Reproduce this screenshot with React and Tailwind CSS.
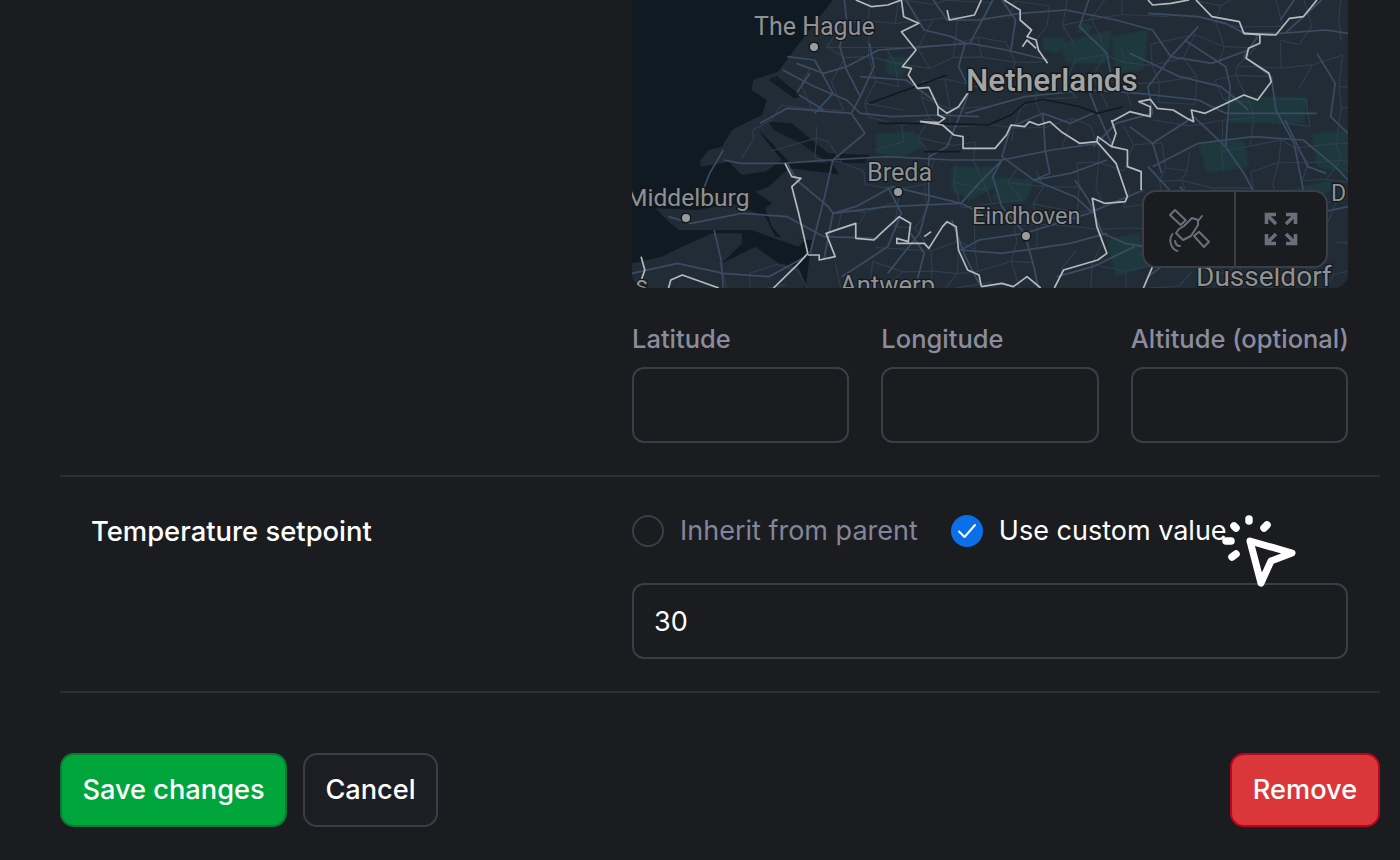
const font = { fontFamily: "Inter, 'Liberation Sans', sans-serif" };

// map shapes are in a 1568x864 space, squeezed to the 716x288 map
const water = ["M0,0 L440,0 L400,70 L355,150 L320,215 L265,240 L262,270 L295,300 L285,345 L225,385 L150,465 L120,520 L0,560 Z"];
// south west corner, in a 720x480 space that starts 130px down the map
const delta = "M0,0 L380,0 L420,40 L470,95 L600,100 L620,130 L580,160 L530,180 L540,330 L530,400 L530,480 L0,480 Z";
const islands = [
  "M205,90 L230,60 L270,50 L300,0 L380,0 L400,30 L450,90 L400,125 L330,135 L290,95 L240,105 L205,110 Z",
  "M370,185 L410,170 L470,115 L600,130 L720,150 L720,480 L520,480 L540,330 L450,325 L420,290 L400,235 L420,220 Z",
  "M70,235 L200,240 L300,220 L400,260 L430,320 L520,330 L500,350 L440,330 L360,300 L240,300 L140,300 L100,265 Z",
  "M0,400 L90,380 L150,350 L240,310 L330,310 L330,340 L270,400 L370,350 L440,400 L500,410 L520,480 L0,480 Z",
];
const estuary = ["M300,365 L350,370 L430,460 L520,465 L510,490 L430,490 L370,430 L310,390 Z", "M310,230 L370,290 L355,295 L300,240 Z"];
const green = [
  "M535,400 L620,395 L640,440 L590,470 L535,460 Z",
  "M700,500 L790,500 L800,560 L740,600 L700,570 Z",
  "M800,530 L880,540 L860,610 L790,600 Z",
  "M940,130 L1050,90 L1040,190 L950,190 Z",
  "M1050,110 L1130,90 L1120,210 L1060,220 Z",
  "M900,110 L950,115 L935,160 L900,150 Z",
  "M560,170 L610,170 L590,230 L555,220 Z",
  "M1240,430 L1340,420 L1350,500 L1260,520 Z",
  "M1300,290 L1480,290 L1470,370 L1310,370 Z",
  "M1490,400 L1568,390 L1568,520 L1500,500 Z",
  "M1040,720 L1110,700 L1130,800 L1060,830 Z",
  "M1350,600 L1530,540 L1540,570 L1380,640 Z",
  "M980,70 L1010,75 L1000,100 L975,95 Z",
];
const roads = [
  "M465,0 L470,60 L455,140 L470,210 L500,290 L480,340 L510,400 L440,480 L420,600 L390,760",
  "M360,190 L420,220 L470,200 L540,150 L640,140 L740,130 L820,150 L910,180",
  "M330,210 L400,260 L470,300 L500,340 L570,350 L670,345 L760,350",
  "M280,370 L340,325 L430,335 L480,340",
  "M600,0 L640,90 L700,110 L730,130 L715,200 L740,270 L720,340 L690,440 L650,470",
  "M740,130 L790,0",
  "M810,0 L840,60 L830,150",
  "M950,30 L1060,60 L1140,90 L1180,170 L1130,260 L1140,340 L1060,370 L1010,440",
  "M1130,40 L1240,50 L1300,70 L1340,100 L1420,100 L1520,90 L1568,100",
  "M1240,80 L1180,170 L1270,190 L1350,150",
  "M1370,110 L1340,170 L1400,230 L1410,330 L1450,430 L1470,570",
  "M1500,160 L1540,250 L1530,350 L1568,400",
  "M1000,270 L1110,280 L1240,300 L1300,340 L1500,340",
  "M730,340 L860,290 L1000,270 L1020,340 L1050,430",
  "M1010,340 L960,370 L900,340 L830,380 L810,470 L880,540 L960,520 L1040,480",
  "M430,480 L560,470 L700,480 L810,480 L920,450 L1020,430",
  "M810,480 L760,550 L720,610 L660,590 L570,560 L490,620 L440,640",
  "M810,480 L790,530 L810,620 L860,700 L880,800 L890,864",
  "M650,470 L650,600 L630,700 L560,820",
  "M900,340 L905,450 L915,520 L880,540 L970,590 L1010,640",
  "M970,540 L1000,600 L1030,700 L1080,730 L1120,740",
  "M860,700 L760,720 L720,750 L810,760 L960,730 L1040,700",
  "M860,700 L1000,640 L1120,570",
  "M1140,430 L1230,350 L1300,440 L1340,520 L1360,570",
  "M1140,500 L1240,430 L1360,410 L1470,420 L1540,500 L1568,540",
  "M1090,380 L1140,430 L1160,520",
  "M1300,440 L1310,260 L1300,200 L1210,120",
  "M1430,100 L1510,0",
  "M1420,60 L1450,0",
  "M200,450 L170,520 L150,590",
  "M200,480 L240,490 L330,490 L430,480",
  "M80,650 L130,670 L240,640 L340,650 L420,710 L540,715",
  "M340,490 L360,540 L430,620 L440,640 L420,780",
  "M180,690 L195,780 L200,864",
  "M0,820 L100,790 L200,820 L300,830 L380,770",
  "M560,560 L590,640 L560,740 L460,830",
  "M440,640 L560,620 L720,610 L780,650",
  "M340,170 L400,180 L440,280 L400,340",
  "M390,220 L360,280 L420,330",
  "M500,230 L600,240 L660,300",
  "M520,130 L530,200 L500,290",
  "M660,0 L690,60 L760,60 L850,40 L950,30",
  "M1000,0 L980,80 L1040,160 L1050,230",
  "M1090,160 L1200,230 L1290,260 L1350,330",
  "M1430,360 L1480,500 L1520,520",
  "M1130,830 L1240,720 L1330,690 L1568,620",
  "M1100,740 L1010,800 L930,830",
  "M700,660 L730,770 L760,850",
  "M610,700 L640,760 L620,864",
  "M1200,560 L1250,640 L1330,690 L1420,640",
  "M1130,500 L1210,620 L1130,720",
];

// thin back roads: a jittered grid over the land
function backRoads() {
  let seed = 7;
  const rnd = () => {
    seed = (seed * 16807) % 2147483647;
    return seed / 2147483647;
  };
  const onLand = (x, y) => (y < 480 ? x > 480 - y * 0.62 : x > 440 + (y > 760 ? -300 : 0));
  const cols = 26;
  const rows = 15;
  const pts = [];
  for (let r = 0; r < rows; r++) {
    const row = [];
    for (let c = 0; c < cols; c++) {
      row.push([c * 64 + rnd() * 44 - 22, r * 62 + rnd() * 44 - 22]);
    }
    pts.push(row);
  }
  const out = [];
  for (let r = 0; r < rows; r++) {
    for (let c = 0; c < cols; c++) {
      const [x, y] = pts[r][c];
      if (!onLand(x, y)) continue;
      if (c + 1 < cols && rnd() < 0.62 && onLand(...pts[r][c + 1])) {
        out.push(`M${x},${y} L${pts[r][c + 1][0]},${pts[r][c + 1][1]}`);
      }
      if (r + 1 < rows && rnd() < 0.62 && onLand(...pts[r + 1][c])) {
        out.push(`M${x},${y} L${pts[r + 1][c][0]},${pts[r + 1][c][1]}`);
      }
    }
  }
  return out;
}
const minor = backRoads();

const borders = [
  "M590,0 L595,50 L628,70 L590,95 L622,150 L592,200 L612,205 L605,225 L625,265 L650,262 L670,320 L670,345 L685,355 L672,368 L632,365 L680,375 L705,405 L725,410 L725,445 L795,445 L820,405 L830,375 L860,380 L870,365 L890,375 L915,365 L940,395 L980,430 L1018,425 L1020,410 L1050,440 L1085,450 L1085,500 L1115,515 L1115,570",
  "M670,320 L690,340 L715,320 L735,280",
  "M1018,425 L1060,490 L1085,590 L1080,605 L1035,610 L1008,595 L1018,680 L1040,760 L1020,780 L945,810 L925,864",
  "M1050,360 L1060,400 L1050,440",
  "M1050,365 L1090,335 L1135,350 L1135,320 L1110,305 L1135,298 L1150,325 L1185,330 L1215,355 L1230,365 L1225,330 L1255,340 L1340,285 L1370,300 L1400,245 L1395,220 L1345,175 L1350,145 L1375,130 L1375,105 L1340,100 L1330,65 L1270,50 L1235,0",
  "M1340,100 L1410,105 L1440,55 L1470,50 L1500,0",
  "M1130,0 L1140,15 L1180,10 L1220,0",
  "M690,30 L695,60 L750,45 L765,0",
  "M815,0 L850,30 L850,60 L875,90 L865,110 L885,120 L890,150 L910,190",
  "M855,140 L865,120 L885,145",
  "M490,0 L525,20 L560,15 L590,0",
  "M335,490 L350,530 L370,535 L350,560 L365,640 L385,760 L365,790 L310,864",
  "M385,765 L410,765 L410,780 L445,770 L425,700 L490,670 L490,715 L530,720 L545,700 L585,650 L610,670 L605,725 L580,715 L580,730 L640,730 L650,745 L680,680 L690,665 L710,680 L715,750 L735,810 L760,825 L765,860",
  "M765,860 L810,850 L835,860 L865,830 L895,864",
  "M80,864 L85,840 L110,825 L190,864",
  "M20,770 L28,810 L18,850",
  "M640,710 L655,695",
  "M1140,800 L1120,864",
];
const deepLines = [
  "M520,310 L600,270 L690,225",
  "M540,370 L660,370 L780,375 L830,345 L860,310 L900,298 L980,320 L1020,340 L1075,320",
  "M640,455 L720,455",
  "M315,230 L365,285",
];
const labels = [
  { x: 122, y: 35, size: 25, t: "The Hague" },
  { x: 235, y: 181, size: 25.2, t: "Breda" },
  { x: -6, y: 206, size: 24.6, t: "Middelburg" },
  { x: 340, y: 224, size: 23.6, t: "Eindhoven" },
  { x: 208, y: 294, size: 25.6, t: "Antwerp" },
  { x: -10, y: 294, size: 25, t: "es" },
  { x: 699, y: 201, size: 23, t: "D" },
  { x: 564, y: 286, size: 28, t: "Dusseldorf" },
];
const cities = [
  [182, 47],
  [266, 192],
  [54, 218],
  [394, 236],
];

function MapPicture() {
  return (
    <svg viewBox="0 0 716 288" className="block w-full h-full">
      <defs>
        <filter id="soft">
          <feGaussianBlur stdDeviation="3" />
        </filter>
      </defs>
      <rect width="716" height="288" fill="#222c37" />
      <g transform="scale(0.45663 0.33333)">
        <g filter="url(#soft)" opacity="0.8">
          {green.map((d) => (
            <path key={d} d={d} fill="#1b3d3f" />
          ))}
        </g>
        {water.map((d) => (
          <path key={d} d={d} fill="#0f1a22" />
        ))}
      </g>
      <g transform="translate(0 130) scale(0.33333)">
        <path d={delta} fill="#0f1a22" />
        {islands.map((d) => (
          <path key={d} d={d} fill="#222c37" />
        ))}
      </g>
      <g transform="scale(0.45663 0.33333)">
        {estuary.map((d) => (
          <path key={d} d={d} fill="#121c25" />
        ))}
        {minor.map((d) => (
          <path key={d} d={d} fill="none" stroke="#2f3e4f" strokeWidth="1.1" vectorEffect="non-scaling-stroke" />
        ))}
        {roads.map((d) => (
          <path key={d} d={d} fill="none" stroke="#3a4c62" strokeWidth="1.7" strokeLinejoin="round" vectorEffect="non-scaling-stroke" />
        ))}
        {deepLines.map((d) => (
          <path key={d} d={d} fill="none" stroke="#10191f" strokeWidth="1.6" vectorEffect="non-scaling-stroke" />
        ))}
        {borders.map((d) => (
          <path key={d} d={d} fill="none" stroke="#b4babe" strokeWidth="1.7" strokeLinejoin="round" vectorEffect="non-scaling-stroke" />
        ))}
      </g>
      {cities.map(([x, y]) => (
        <circle key={x} cx={x} cy={y} r="4" fill="#9a9c9c" stroke="#15191d" strokeWidth="3" paintOrder="stroke" />
      ))}
      {labels.map((l) => (
        <text
          key={l.t}
          x={l.x}
          y={l.y}
          fill="#8f9294"
          stroke="#14181c"
          strokeWidth="2.5"
          paintOrder="stroke"
          fontSize={l.size}
          style={{ fontFamily: "Roboto, sans-serif", fontWeight: 400 }}
        >
          {l.t}
        </text>
      ))}
      <text
        x="334"
        y="91"
        fill="#a3a5a5"
        stroke="#14181c"
        strokeWidth="3"
        paintOrder="stroke"
        fontSize="31.5"
        style={{ fontFamily: "Roboto, sans-serif", fontWeight: 500 }}
      >
        Netherlands
      </text>
    </svg>
  );
}

function SatelliteIcon() {
  return (
    <svg width="60" height="56" viewBox="0 0 60 56" fill="none" stroke="#6c6e7c" strokeWidth="2" strokeLinejoin="round" strokeLinecap="round">
      <path d="M11 14 L16 9 L26.7 19.3 L21.7 24 Z" />
      <path d="M35 35 L40 30.7 L50 40.7 L45 46 Z" />
      <path d="M25 25 L33 17 L39 19 L39 24 L32 35 L24 39 L17 32 L20 28 Z" />
      <path d="M39 20 L43 15" />
      <path d="M13.5 33 C9 39 12 48 18.5 50" />
      <path d="M16 40 C16.5 43 18.5 45 21 45" />
    </svg>
  );
}

function ExpandIcon() {
  return (
    <svg width="52" height="52" viewBox="0 0 52 52" fill="none" stroke="#6c6e7c" strokeWidth="3.6">
      <path d="M21 11.5 H11.5 V21 M11.5 11.5 L21 21" />
      <path d="M31 11.5 H40.5 V21 M40.5 11.5 L31 21" />
      <path d="M21 40.5 H11.5 V31 M11.5 40.5 L21 31" />
      <path d="M31 40.5 H40.5 V31 M40.5 40.5 L31 31" />
    </svg>
  );
}

function ClickCursor() {
  return (
    <svg
      className="absolute left-[1218px] top-[511px]"
      width="84"
      height="82"
      viewBox="0 0 84 82"
      fill="none"
      stroke="#fff"
      strokeLinecap="round"
      strokeLinejoin="round"
    >
      <path d="M32 30 L74 42 L53 50 L43 72 Z" strokeWidth="7" />
      <path d="M31 8 L31 10 M16 15 L18 17 M46 17 L49 14 M8 30 L13 30 M14 46 L18 43" strokeWidth="7.5" />
    </svg>
  );
}

function CoordField({ label }) {
  return (
    <div>
      <label className="block whitespace-nowrap text-[25.5px] font-[450] leading-[38px] mb-[9px] text-[#8b8c9e]">{label}</label>
      <input className="block w-full h-[76px] rounded-[12px] border-2 border-[#3a3f47] bg-[#1a1c20]" />
    </div>
  );
}

export default function App() {
  return (
    <div className="relative h-[860px] w-[1400px] overflow-hidden bg-[#1a1c20] pl-[60px] pr-[20px] text-white" style={font}>
      <div className="border-b-2 border-[#2c2f35] pb-[32px] pl-[572px] pr-[32px]">
        <div className="relative h-[288px] overflow-hidden rounded-b-[14px]">
          <MapPicture />
          <div className="absolute right-[20px] bottom-[20px] flex h-[78px] w-[186px] rounded-[14px] border-2 border-[#3a3f47] bg-[#1a1c20]">
            <button className="flex w-[92px] items-center justify-center border-r-2 border-[#3a3f47]">
              <SatelliteIcon />
            </button>
            <button className="flex flex-1 items-center justify-center">
              <ExpandIcon />
            </button>
          </div>
        </div>
        <div className="mt-[32px] grid grid-cols-3 gap-[32px]">
          <CoordField label="Latitude" />
          <CoordField label="Longitude" />
          <CoordField label="Altitude (optional)" />
        </div>
      </div>

      <div className="flex border-b-2 border-[#2c2f35] pb-[32px] pt-[38px]">
        <div className="w-[572px] pl-[31px] text-[27.4px] leading-[32px] font-[450]">Temperature setpoint</div>
        <div className="w-[716px]">
          <div className="flex h-[32px] items-center gap-[33px] text-[27px]">
            <div className="flex items-center gap-[16px] text-[#83859a]">
              <span className="h-[32px] w-[32px] rounded-full border-2 border-[#3a3f47]" />
              <span>Inherit from parent</span>
            </div>
            <div className="flex items-center gap-[16px]">
              <span className="flex h-[32px] w-[32px] items-center justify-center rounded-full bg-[#0a6fe8]">
                <svg width="20" height="16" viewBox="0 0 20 16" fill="none" stroke="#fff" strokeWidth="2" strokeLinecap="round" strokeLinejoin="round">
                  <path d="M2 8.5 L7.5 14 L18 2" />
                </svg>
              </span>
              <span>Use custom value</span>
            </div>
          </div>
          <input
            defaultValue="30"
            className="mt-[36px] block h-[76px] w-full rounded-[12px] border-2 border-[#3a3f47] bg-[#1a1c20] px-[20px] text-[27px] text-white outline-none"
          />
        </div>
      </div>

      <div className="mt-[60px] flex items-center justify-between">
        <div className="flex gap-[16px]">
          <button className="h-[74px] w-[227px] rounded-[14px] border-2 border-[#0b7a35] bg-[#00a63c] text-[27.2px] font-[450]">Save changes</button>
          <button className="h-[74px] w-[135px] rounded-[14px] border-2 border-[#3a3f47] bg-[#1c1e23] text-[27.2px] font-[450]">Cancel</button>
        </div>
        <button className="h-[74px] w-[150px] rounded-[14px] border-2 border-[#b8061f] bg-[#db373b] text-[27.2px] font-[450]">Remove</button>
      </div>

      <ClickCursor />
    </div>
  );
}
